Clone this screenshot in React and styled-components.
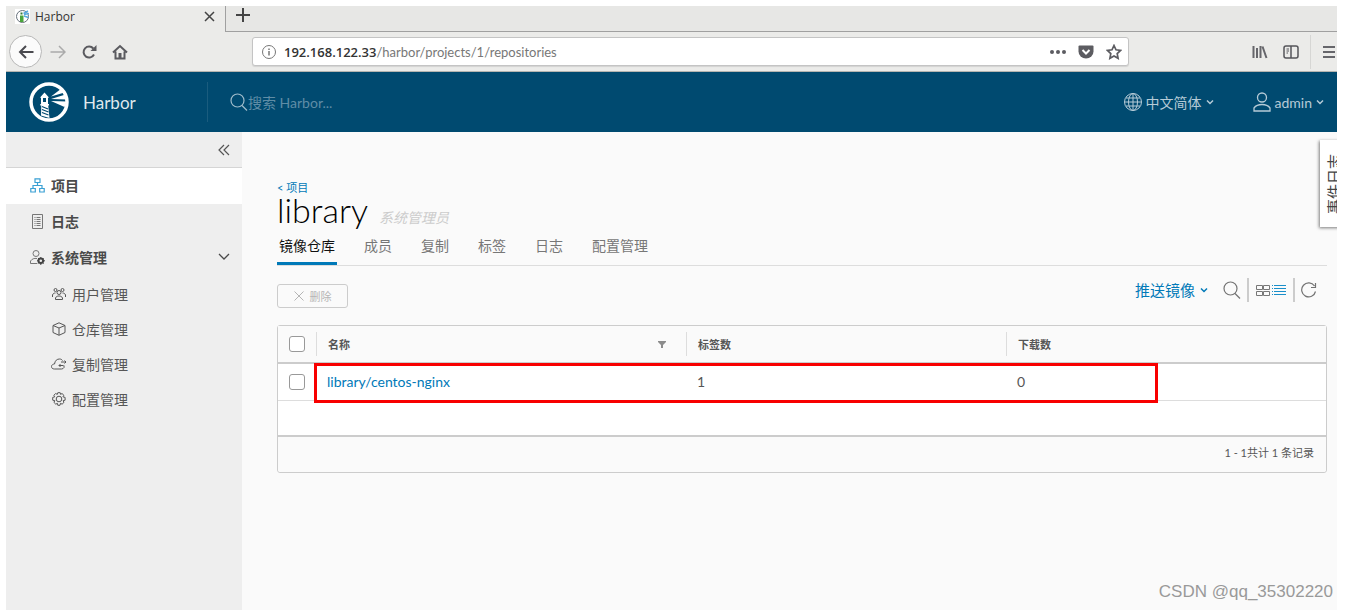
import React from 'react'
import styled, { createGlobalStyle } from 'styled-components'

const tabs = ['镜像仓库', '成员', '复制', '标签', '日志', '配置管理']

function Svg({ w, h, box, color, sw, children }) {
  return (
    <svg width={w} height={h || w} viewBox={box || `0 0 ${w} ${h || w}`} fill="none" stroke={color || 'currentColor'} strokeWidth={sw || 1} aria-hidden="true">
      {children}
    </svg>
  )
}

const Caret = ({ w = 8, sw = 1.5 }) => (
  <Svg w={w} h={w} box="0 0 8 8" sw={sw}><path d="M1 2.500 4 5.500 7 2.500" /></Svg>
)

const Favicon = () => (
  <Svg w={15} h={15}>
    <rect width="15" height="15" fill="#fff" stroke="none" />
    <circle cx="7.500" cy="7.500" r="6" stroke="#66707a" />
    <path d="M5 6.500h3.500V13H5z" fill="#4aa53c" stroke="none" />
    <path d="M5.500 3.500h2v2h-2z" fill="#357a3b" stroke="none" />
    <path d="M8.500 4.500 13 2M9 5.500 14 4.500M9 7l4.500 1.500" stroke="#58a9dc" strokeWidth="1.500" />
  </Svg>
)

const HarborLogo = () => (
  <Svg w={40} h={40}>
    <circle cx="20" cy="20" r="18" stroke="#fff" strokeWidth="3.500" />
    <path d="M11.500 15 15.500 10.500 19.500 15v1H19v6h1v1.500h-.8L20.500 36l-8.500-2.500.3-10h-1V22h.7v-6h-.5z" fill="#fff" stroke="none" />
    <path d="M14 16h3v4h-3z" fill="#004a70" stroke="none" />
    <path d="M13 24.500l6 2.500M13 27.500l6.500 2.500M13 30.500l6.500 2.500" stroke="#004a70" strokeWidth="1.200" />
    <path d="M22 14.500 32.500 6.500l3 4zM22 17l14.500-4.500 1.500 5zM22 19l15.500.5-2 5.500z" fill="#fff" stroke="none" />
  </Svg>
)

const SearchIcon = ({ color }) => (
  <Svg w={18} color={color} sw={1.2}><circle cx="7.500" cy="7.500" r="6.500" /><path d="m12 12.500 5 5" /></Svg>
)

const GlobeIcon = () => (
  <Svg w={18}>
    <circle cx="9" cy="9" r="8.500" />
    <ellipse cx="9" cy="9" rx="4.500" ry="8.500" />
    <path d="M9 .5v17M.5 9h17M2 5h14M2 13h14" />
  </Svg>
)

const UserIcon = () => (
  <Svg w={18} h={20} sw={1.3}>
    <circle cx="9" cy="5.500" r="4.500" />
    <path d="M1 19v-3c2-2.700 5-3.500 8-3.500s6 .8 8 3.500v3z" />
  </Svg>
)

const ProjectIcon = () => (
  <Svg w={15} h={15} color="#3aa0d4" sw={1.2}>
    <path d="M5 .8h5v3.700H5zM.8 10.500h4.500v3.500H.8zM9.700 10.500h4.500v3.500H9.700zM7.500 4.500v3M3 10.500v-3h9v3" />
  </Svg>
)

const LogIcon = () => (
  <Svg w={15} h={15} color="#777">
    <path d="M2.500 .5h10v14h-10zM4.500 3.500h1M4.500 5.500h1M4.500 7.500h1M4.500 9.500h1M4.500 11.500h1M6.500 3.500h4M6.500 5.500h4M6.500 7.500h4M6.500 9.500h4M6.500 11.500h4" />
  </Svg>
)

const AdminIcon = () => (
  <Svg w={15} h={15} color="#777">
    <circle cx="6" cy="3.500" r="3" />
    <path d="M7 13.500H.5V11C2 9 4 8 7 8.500" />
    <circle cx="10.800" cy="10.800" r="2.300" stroke="#444" strokeWidth="2" />
    <path d="M10.800 7v1.500M10.800 13v2M7 10.800h1.500M13 10.800h2M8 8l1 1M13.600 8l-1 1M8 13.600l1-1M13.600 13.600l-1-1" stroke="#444" />
  </Svg>
)

const UsersIcon = () => (
  <Svg w={14} h={14}>
    <circle cx="3.500" cy="3" r="1.500" /><circle cx="10.500" cy="3" r="1.500" /><circle cx="7" cy="5.500" r="2" />
    <path d="M3.500 12.500V11c.7-1.500 1.700-2 3.500-2s2.800.5 3.500 2v1.500zM.5 10V8c.5-1.500 1.500-2 3-2M13.500 10V8c-.5-1.500-1.500-2-3-2" />
  </Svg>
)

const CubeIcon = () => (
  <Svg w={14} h={14}><path d="M7 .8 13 3.500v7L7 13.300 1 10.500v-7zM1 3.500 7 6l6-2.500M7 6v7" /></Svg>
)

const CloudIcon = () => (
  <Svg w={16} h={13}>
    <path d="M13 8.500v2c-.5 1-1.500 1.500-2.500 1.500h-7C1.500 12 .5 11 .5 9.500S2 7 3.500 7C4 3.500 6 2 8.500 2c1.500 0 2.500.7 3 1.500" />
    <path d="M10 5h5M13.500 3.500 15 5l-1.500 1.500M12.500 8.500H8M9.500 7 8 8.500 9.500 10" />
  </Svg>
)

const CogIcon = () => (
  <Svg w={14} h={14}>
    <circle cx="7" cy="7" r="2.800" />
    <path d="M5.800.7h2.400l.4 1.700 1.400-.9 1.900 1.800-1 1.500 2.200.6v2.800l-2 .5.900 1.600-1.900 1.900-1.600-.9-.5 2H5.800l-.4-2-1.600.9-1.900-1.900 1-1.600-2.200-.5V5.400l2.100-.6-1-1.500 1.900-1.800 1.600.9z" />
  </Svg>
)

const subMenu = [
  ['用户管理', UsersIcon],
  ['仓库管理', CubeIcon],
  ['复制管理', CloudIcon],
  ['配置管理', CogIcon],
]

function BrowserChrome() {
  return (
    <>
      <TabStrip>
        <BrowserTab>
          <Favicon />
          <TabTitle>Harbor</TabTitle>
          <ChromeButton aria-label="关闭标签页">
            <Svg w={11} sw={1.5} color="#444"><path d="m1 1 9 9M10 1l-9 9" /></Svg>
          </ChromeButton>
        </BrowserTab>
        <NewTab aria-label="新建标签页">
          <Svg w={14} sw={2} color="#444"><path d="M7 0v14M0 7h14" /></Svg>
        </NewTab>
      </TabStrip>
      <NavBar>
        <NavGroup>
          <BackButton aria-label="后退">
            <Svg w={16} sw={2} color="#4a4a4f"><path d="M15.500 8H2M8 2 2 8l6 6" /></Svg>
          </BackButton>
          <ChromeButton aria-label="前进">
            <Svg w={16} sw={1.5} color="#aaa"><path d="M.5 8H15M9 2l6 6-6 6" /></Svg>
          </ChromeButton>
          <ChromeButton aria-label="刷新">
            <Svg w={16} sw={2} color="#5a5a5f">
              <path d="M13 10.500a5.500 5.500 0 1 1-.7-6" /><path d="M15.500 1v6h-6z" fill="#5a5a5f" stroke="none" />
            </Svg>
          </ChromeButton>
          <ChromeButton aria-label="主页">
            <Svg w={16} sw={2} color="#5a5a5f">
              <path d="m1 8.500 7-6.500 7 6.500M3.500 7.500v7h9v-7" /><path d="M6.500 9h3v5h-3z" fill="#5a5a5f" stroke="none" />
            </Svg>
          </ChromeButton>
        </NavGroup>
        <AddressBar>
          <Svg w={14} color="#777"><circle cx="7" cy="7" r="6.500" /><path d="M7 6v4.500M7 3.500V5" strokeWidth="1.500" /></Svg>
          <Host htmlFor="url">192.168.122.33</Host>
          <UrlInput id="url" defaultValue="/harbor/projects/1/repositories" />
          <AddressTools>
            <ChromeButton aria-label="页面操作">
              <Svg w={16} h={4}>
                <g fill="#5c5c61" stroke="none"><circle cx="2" cy="2" r="2" /><circle cx="8" cy="2" r="2" /><circle cx="14" cy="2" r="2" /></g>
              </Svg>
            </ChromeButton>
            <ChromeButton aria-label="Pocket">
              <Svg w={16} h={14}>
                <path d="M1.500.5h13q1 0 1 1v5a7.500 7 0 0 1-15 0v-5q0-1 1-1z" fill="#5c5c61" stroke="none" />
                <path d="m4.500 5 3.500 3.500L11.500 5" stroke="#fff" strokeWidth="2" />
              </Svg>
            </ChromeButton>
            <ChromeButton aria-label="收藏">
              <Svg w={16} sw={1.7} color="#5c5c61"><path d="m8 1.500 2 4.300 4.600.6-3.400 3.200.9 4.700L8 12l-4.100 2.300.9-4.700L1.400 6.400 6 5.800z" /></Svg>
            </ChromeButton>
          </AddressTools>
        </AddressBar>
        <NavTools>
          <ChromeButton aria-label="书库">
            <Svg w={16} h={14} sw={2} color="#66666b"><path d="M1.500 1v12M5 3v10M8.500 1v12M10.500 1.500 14.500 13" /></Svg>
          </ChromeButton>
          <ChromeButton aria-label="侧栏">
            <Svg w={16} h={14} sw={1.5} color="#55555a"><rect x="1" y="1" width="14" height="12" rx="2" /><path d="M8 1v12" /><path d="M3.500 4H6M3.500 6H6M3.500 8H5" strokeWidth="1" /></Svg>
          </ChromeButton>
          <MenuCell>
            <ChromeButton aria-label="菜单">
              <Svg w={12} h={12} sw={2} color="#66666b"><path d="M0 1h12M0 6h12M0 11h12" /></Svg>
            </ChromeButton>
          </MenuCell>
        </NavTools>
      </NavBar>
    </>
  )
}

function SideNav() {
  return (
    <Sidebar>
      <Collapse>
        <PlainButton aria-label="收起">
          <Svg w={12} sw={1.2} color="#555"><path d="M6 1 1 6l5 5M11 1 6 6l5 5" /></Svg>
        </PlainButton>
      </Collapse>
      <NavItem href="#projects" $active><ProjectIcon />项目</NavItem>
      <NavItem href="#logs"><LogIcon />日志</NavItem>
      <NavItem href="#system">
        <AdminIcon />系统管理
        <Push><Svg w={12} h={8} sw={1.3}><path d="m1 1 5 5 5-5" /></Svg></Push>
      </NavItem>
      {subMenu.map(([label, Icon]) => (
        <SubItem key={label} href="#sub"><IconSlot><Icon /></IconSlot>{label}</SubItem>
      ))}
    </Sidebar>
  )
}

function RepoTable() {
  return (
    <Grid>
      <Table>
        <colgroup><col width="38" /><col width="370" /><col width="320" /><col /></colgroup>
        <thead>
          <tr>
            <th><CheckBox type="checkbox" aria-label="全选" /></th>
            <th><HeadCell>名称
              <FilterButton aria-label="过滤">
                <Svg w={8} h={8}><path d="M0 1h8v1L5 5v3H3V5L0 2z" fill="#8c8c8c" stroke="none" /></Svg>
              </FilterButton>
            </HeadCell></th>
            <th><HeadCell>标签数</HeadCell></th>
            <th><HeadCell>下载数</HeadCell></th>
          </tr>
        </thead>
        <tbody>
          <tr>
            <td><CheckBox type="checkbox" aria-label="选择 library/centos-nginx" /></td>
            <td><RepoLink href="#repo">library/centos-nginx</RepoLink></td>
            <td>1</td>
            <td>0</td>
          </tr>
        </tbody>
      </Table>
      <GridFooter>1 - 1共计 1 条记录</GridFooter>
      <Highlight />
    </Grid>
  )
}

export default function App() {
  return (
    <Page>
      <GlobalStyle />
      <BrowserChrome />
      <Header>
        <Brand href="#home"><HarborLogo />Harbor</Brand>
        <SearchBox>
          <SearchIcon color="#9fbccb" />
          <SearchInput placeholder="搜索 Harbor..." aria-label="搜索 Harbor" />
        </SearchBox>
        <HeaderMenus>
          <HeaderButton><GlobeIcon />中文简体<Caret /></HeaderButton>
          <HeaderButton><UserIcon />admin<Caret /></HeaderButton>
        </HeaderMenus>
      </Header>
      <Body>
        <SideNav />
        <Main>
          <Crumb href="#projects">&lt; 项目</Crumb>
          <TitleRow>
            <Title>library</Title>
            <Role>系统管理员</Role>
          </TitleRow>
          <TabList>
            {tabs.map((t, i) => <TabButton key={t} $active={i === 0}>{t}</TabButton>)}
          </TabList>
          <Toolbar>
            <DeleteButton disabled>
              <Svg w={10} color="#b5b5b5"><path d="m.5.5 9 9M9.500.5l-9 9" /></Svg>删除
            </DeleteButton>
            <Actions>
              <PushButton>推送镜像<Caret /></PushButton>
              <PlainButton aria-label="搜索"><SearchIcon color="#737373" /></PlainButton>
              <Views>
                <PlainButton aria-label="卡片视图">
                  <Svg w={14} h={12} color="#777"><path d="M.5 1.500h6v4h-6zM7.500 1.500h6v4h-6zM.5 7.500h6v4h-6zM7.500 7.500h6v4h-6z" /></Svg>
                </PlainButton>
                <PlainButton aria-label="列表视图">
                  <Svg w={14} h={12} color="#1a8fca"><path d="M0 1.500h1M2 1.500h12M0 4.500h1M2 4.500h12M0 7.500h1M2 7.500h12M0 10.500h1M2 10.500h12" /></Svg>
                </PlainButton>
              </Views>
              <PlainButton aria-label="刷新">
                <Svg w={16} color="#737373" sw={1.2}><path d="M14.500 9.500A7 7 0 1 1 13.500 4M14.500 1v4.500H10" /></Svg>
              </PlainButton>
            </Actions>
          </Toolbar>
          <RepoTable />
          <EventTab>事件日志</EventTab>
          <Watermark>CSDN @qq_35302220</Watermark>
        </Main>
      </Body>
    </Page>
  )
}

const GlobalStyle = createGlobalStyle`
*{
  box-sizing:border-box;
}
body{
  margin:0;
  background:#fff;
  color:#565656;
  font-family:Lato, "Noto Sans CJK SC", sans-serif;
  font-size:14px;
}
a{
  text-decoration:none;
}
button,input{
  font-family:inherit;
}
svg{
  display:block;
  flex:none;
}
`

const Page = styled.div`
min-height:100vh;
padding:6px 11px 0 6px;
display:flex;
flex-direction:column;
`

const PlainButton = styled.button`
border:0;
padding:0;
background:none;
color:inherit;
display:flex;
align-items:center;
cursor:pointer;
`

const ChromeButton = styled(PlainButton)`
justify-content:center;
`

const TabStrip = styled.div`
height:26px;
display:flex;
background:#e7e7e5;
`

const BrowserTab = styled.div`
width:220px;
padding:0 10px 6px 9px;
display:flex;
align-items:center;
gap:5px;
background:#ebebe9;
border-right:1px solid #a0a0a0;
`

const TabTitle = styled.span`
flex:1;
font-family:"Open Sans", sans-serif;
font-size:12px;
color:#333;
`

const NewTab = styled(PlainButton)`
flex:1;
padding:0 10px 7px;
border-bottom:1px solid #a0a0a0;
`

const NavBar = styled.div`
height:40px;
display:flex;
align-items:center;
background:#ebebe9;
border-bottom:1px solid #b5b5b0;
`

const NavGroup = styled.div`
width:246px;
padding-left:3px;
display:flex;
align-items:center;
gap:15px;
`

const BackButton = styled(ChromeButton)`
width:33px;
height:33px;
margin-right:-7px;
border:1px solid #b8b8b8;
border-radius:50%;
background:#fbfbfb;
`

const AddressBar = styled.div`
flex:1;
height:29px;
padding:0 6px 0 9px;
display:flex;
align-items:center;
background:#fff;
border:1px solid #c4c4c4;
border-radius:3px;
box-shadow:0 1px 1px rgba(0,0,0,0.1);
`

const Host = styled.label`
margin-left:8px;
font-family:"Open Sans", sans-serif;
font-size:13px;
font-weight:600;
color:#333;
`

const UrlInput = styled.input`
flex:1;
min-width:0;
border:0;
padding:0;
font-size:13px;
color:#777;
background:none;
outline:none;
`

const AddressTools = styled.div`
display:flex;
align-items:center;
gap:12px;
`

const NavTools = styled.div`
width:208px;
height:34px;
display:flex;
align-items:center;
justify-content:flex-end;
gap:15px;
overflow:hidden;
`

const MenuCell = styled.div`
height:34px;
margin-left:-4px;
padding:0 2px 0 12px;
display:flex;
align-items:center;
border-left:1px solid #d6d6d4;
`

const Header = styled.header`
height:60px;
display:flex;
align-items:center;
background:#004a70;
color:#b6cbd7;
`

const Brand = styled.a`
width:202px;
height:40px;
padding-left:23px;
display:flex;
align-items:center;
gap:14px;
border-right:1px solid #1a5c7e;
color:#dfe8ed;
font-size:17px;
`

const SearchBox = styled.div`
flex:1;
padding-left:22px;
display:flex;
align-items:center;
`

const SearchInput = styled.input`
flex:1;
border:0;
padding:0;
background:none;
outline:none;
color:#fff;
font-size:14px;
&::placeholder{
  color:#5f8da6;
  opacity:1;
}
`

const HeaderMenus = styled.div`
padding-right:13px;
display:flex;
gap:39px;
`

const HeaderButton = styled(PlainButton)`
gap:4px;
font-size:14px;
`

const Body = styled.div`
flex:1;
display:flex;
`

const Sidebar = styled.nav`
width:236px;
background:#eee;
`

const Collapse = styled.div`
height:36px;
padding-right:12px;
display:flex;
align-items:center;
justify-content:flex-end;
border-bottom:1px solid #d5d5d5;
`

const NavItem = styled.a`
height:36px;
padding:0 12px 2px 24px;
display:flex;
align-items:center;
gap:6px;
color:#4a4a4a;
font-weight:bold;
background:${props => props.$active ? '#fff' : 'none'};
`

const Push = styled.span`
margin-left:auto;
`

const SubItem = styled(NavItem)`
height:35px;
padding:0 12px 0 45px;
gap:5px;
font-weight:normal;
color:#565656;
`

const IconSlot = styled.span`
width:16px;
display:flex;
justify-content:center;
`

const Main = styled.main`
position:relative;
flex:1;
min-width:0;
padding:48px 10px 0 35px;
overflow:hidden;
background:#fafafa;
`

const Crumb = styled.a`
display:block;
font-size:11px;
line-height:16px;
color:#0079b8;
`

const TitleRow = styled.div`
height:32px;
display:flex;
align-items:baseline;
gap:11px;
line-height:28px;
`

const Title = styled.h1`
margin:0;
font-size:34px;
font-weight:300;
color:#000;
`

const Role = styled.em`
font-size:14px;
color:#ccc;
`

const TabList = styled.div`
height:38px;
display:flex;
gap:25px;
border-bottom:1px solid #ddd;
`

const TabButton = styled(PlainButton)`
padding:0 2px 4px;
font-size:14px;
color:${props => props.$active ? '#111' : '#777'};
box-shadow:${props => props.$active ? 'inset 0 -3px 0 #0079b8' : 'none'};
`

const Toolbar = styled.div`
height:59px;
display:flex;
align-items:center;
justify-content:space-between;
`

const DeleteButton = styled.button`
width:71px;
height:24px;
display:flex;
align-items:center;
justify-content:center;
gap:6px;
padding:0;
font-size:11px;
color:#b5b5b5;
background:none;
border:1px solid #ccc;
border-radius:3px;
`

const Actions = styled.div`
padding:0 10px 12px 0;
display:flex;
align-items:center;
gap:6px;
`

const PushButton = styled(PlainButton)`
gap:5px;
margin-right:9px;
font-size:15px;
color:#0079b8;
`

const Views = styled.div`
height:24px;
padding:0 7px;
display:flex;
align-items:center;
gap:2px;
border-left:2px solid #ccc;
border-right:2px solid #ccc;
`

const Grid = styled.section`
position:relative;
border:1px solid #ccc;
border-radius:3px;
background:#fff;
`

const Table = styled.table`
width:100%;
table-layout:fixed;
border-collapse:collapse;
th,td{
  height:37px;
  padding:0 12px;
  text-align:left;
}
th{
  padding:0;
  font-size:11px;
  background:#fafafa;
  border-bottom:2px solid #ccc;
}
td{
  padding:0 11px;
  font-size:14px;
  border-bottom:1px solid #ddd;
}
`

const HeadCell = styled.div`
height:24px;
padding:0 20px 0 11px;
display:flex;
align-items:center;
justify-content:space-between;
border-left:1px solid #ddd;
`

const FilterButton = styled(PlainButton)``

const CheckBox = styled.input`
appearance:none;
display:block;
width:16px;
height:16px;
margin:0;
background:#fff;
border:1px solid #999;
border-radius:3px;
th &{
  margin-left:11px;
}
`

const RepoLink = styled.a`
color:#0079b8;
`

const GridFooter = styled.div`
height:71px;
padding:35px 12px 0;
line-height:34px;
text-align:right;
font-size:11px;
border-radius:0 0 3px 3px;
background:linear-gradient(#fff 34px, #ccc 34px, #ccc 36px, #fafafa 36px);
`

const Highlight = styled.div`
position:absolute;
left:36px;
right:168px;
top:37px;
height:40px;
border:3px solid #f80000;
`

const EventTab = styled(PlainButton)`
position:absolute;
top:8px;
right:-9px;
width:26px;
height:87px;
justify-content:center;
writing-mode:vertical-rl;
text-orientation:sideways;
transform:rotate(180deg);
font-size:15px;
color:#444;
background:#fff;
box-shadow:1px -1px 3px rgba(0,0,0,0.5);
`

const Watermark = styled.div`
position:absolute;
right:4px;
bottom:8px;
font-family:"Liberation Sans", sans-serif;
font-size:17px;
line-height:20px;
color:#999;
`
